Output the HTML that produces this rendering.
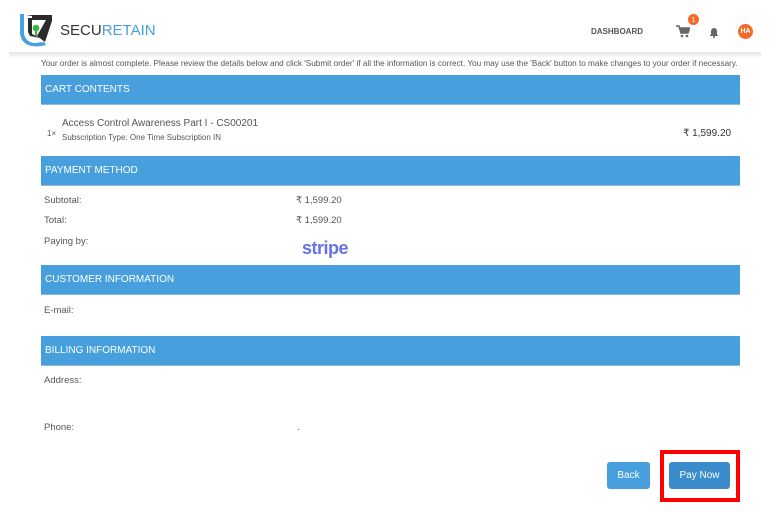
<!DOCTYPE html>
<html><head><meta charset="utf-8"><style>
*{margin:0;padding:0;box-sizing:border-box}
body{width:776px;height:512px;overflow:hidden;background:#fff;font-family:"Liberation Sans",Arial,sans-serif;color:#555;position:relative}
.a{position:absolute}
.bar{position:absolute;left:41px;width:699px;height:30px;background:#479fde;color:#fff;font-size:10px;line-height:30px;padding-left:4px;border-bottom:1px solid #8fb9d8}
.t{position:absolute;font-size:9.5px;color:#555;white-space:nowrap}
</style></head><body>
<div class="a" style="left:0;top:52px;width:776px;height:6px;background:linear-gradient(#e4e4e4,#fff)"></div>
<div class="a" style="left:0;top:52px;width:9px;height:460px;background:#fff"></div>
<div class="a" style="left:761px;top:52px;width:15px;height:460px;background:#fff"></div>
<svg class="a" style="left:18px;top:12px" width="38" height="36" viewBox="0 0 38 36">
<path d="M2 2 L6 2 L6 22 Q8 30 16 31 L26 30 L28 33 Q18 36 10 33 Q2 29 2 20 Z" fill="#4a9fe0"/>
<path d="M8 3 L34 3 L34 9 L27 30 L19 24 L28 8 L14 8 L14 4 Z" fill="#2b2b2b"/>
<path d="M10 6 L14 6 L14 22 L22 26 L12 24 L10 20 Z" fill="#2b2b2b"/>
<circle cx="18" cy="16" r="3.3" fill="#36b34a"/><rect x="17" y="18" width="2.2" height="6" fill="#36b34a"/>
</svg>
<div class="a" style="left:60px;top:22px;font-size:15px;color:#333">SECU<span style="color:#4a9fe0">RETAIN</span></div>
<div class="a" style="left:591px;top:27px;font-size:8px;font-weight:bold;color:#555">DASHBOARD</div>
<svg class="a" style="left:676px;top:25px" width="14" height="13" viewBox="0 0 14 13"><path d="M0 1 H3 L5 8 H12 L13.5 3 H4" fill="none" stroke="#666" stroke-width="1.6"/><path d="M4 3 H13.5 L12 8 H5 Z" fill="#666"/><circle cx="6" cy="11" r="1.3" fill="#666"/><circle cx="11" cy="11" r="1.3" fill="#666"/></svg>
<div class="a" style="left:688px;top:14px;width:11px;height:11px;border-radius:50%;background:#f26b2a;color:#fff;font-size:7.5px;text-align:center;line-height:11px">1</div>
<svg class="a" style="left:709px;top:27px" width="10" height="11" viewBox="0 0 10 11"><path d="M5 1 Q8 1 8 5 V8 H9 V9 H1 V8 H2 V5 Q2 1 5 1Z" fill="#666"/><circle cx="5" cy="10" r="1" fill="#666"/></svg>
<div class="a" style="left:738px;top:24px;width:15px;height:15px;border-radius:50%;background:#f26b2a;color:#fff;font-size:7px;font-weight:bold;text-align:center;line-height:15px">HA</div>
<div class="t" style="left:41px;top:59px;font-size:8.2px">Your order is almost complete. Please review the details below and click 'Submit order' if all the information is correct. You may use the 'Back' button to make changes to your order if necessary.</div>
<div class="bar" style="top:75px">CART CONTENTS</div>
<div class="t" style="left:47px;top:129px;font-size:8px">1×</div>
<div class="t" style="left:62px;top:118px;font-size:10px">Access Control Awareness Part I - CS00201</div>
<div class="t" style="left:62px;top:133px;font-size:8px">Subscription Type: One Time Subscription IN</div>
<div class="t" style="left:683px;top:128px;font-size:10px;color:#333">₹ 1,599.20</div>
<div class="bar" style="top:156px">PAYMENT METHOD</div>
<div class="t" style="left:44px;top:195px">Subtotal:</div>
<div class="t" style="left:296px;top:195px">₹ 1,599.20</div>
<div class="t" style="left:44px;top:215px">Total:</div>
<div class="t" style="left:296px;top:215px">₹ 1,599.20</div>
<div class="t" style="left:44px;top:236px">Paying by:</div>
<div class="t" style="left:302px;top:238px;font-size:18px;font-weight:bold;color:#6772e5;letter-spacing:-0.5px">stripe</div>
<div class="bar" style="top:265px">CUSTOMER INFORMATION</div>
<div class="t" style="left:44px;top:305px">E-mail:</div>
<div class="bar" style="top:336px">BILLING INFORMATION</div>
<div class="t" style="left:44px;top:375px">Address:</div>
<div class="t" style="left:44px;top:422px">Phone:</div>
<div class="t" style="left:297px;top:422px">.</div>
<div class="a" style="left:607px;top:462px;width:43px;height:27px;background:#479fde;border-radius:3px;color:#fff;font-size:10px;text-align:center;line-height:27px">Back</div>
<div class="a" style="left:660px;top:450px;width:80px;height:52px;border:4px solid #f00"></div>
<div class="a" style="left:669px;top:462px;width:61px;height:27px;background:#3a8ccb;border-radius:3px;color:#fff;font-size:10px;text-align:center;line-height:27px">Pay Now</div>
</body></html>
